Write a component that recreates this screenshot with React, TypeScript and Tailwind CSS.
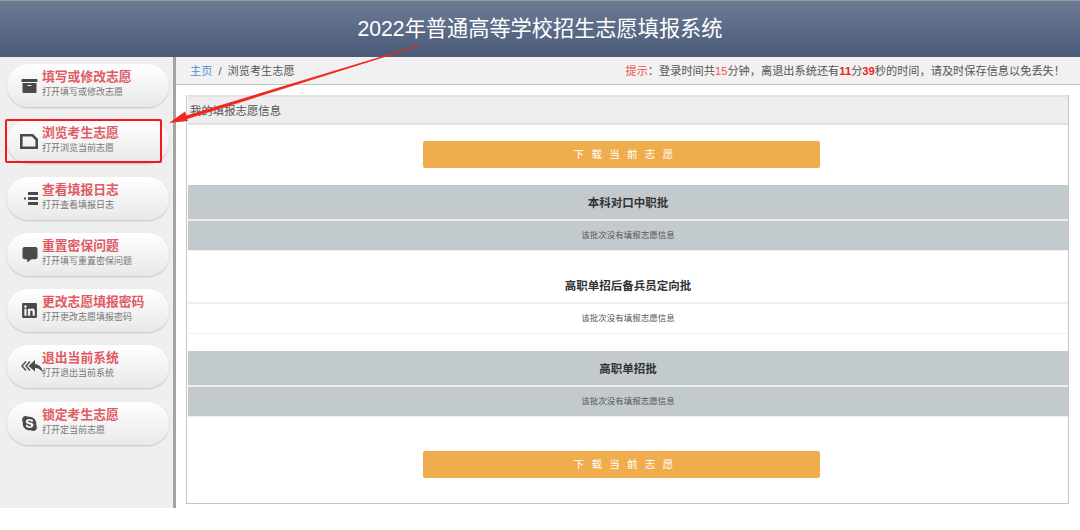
import type { ReactNode } from 'react';
import { FaArchive, FaCommentAlt, FaLinkedin, FaSkype } from 'react-icons/fa';

const font = { fontFamily: '"Liberation Sans", "Noto Sans CJK SC", sans-serif' };

function NoteIcon() {
  return (
    <svg viewBox="0 0 18 15" className="h-[15px] w-[18px]">
      <path d="M1.3 1.3h11.2l4.2 4.2v8.2H1.3z" fill="#f4f4f4" stroke="#4a4a4a" strokeWidth="2.6" />
    </svg>
  );
}

function ListIcon() {
  return (
    <svg viewBox="0 0 14 13" className="h-[13px] w-[14px]" fill="#4a4a4a">
      <rect x="4" y="0" width="10" height="3" />
      <rect x="4" y="5" width="10" height="3" />
      <rect x="4" y="10" width="10" height="3" />
      <rect x="0" y="5.5" width="2" height="2" />
    </svg>
  );
}

function ExitIcon() {
  return (
    <svg viewBox="0 0 22 15" className="-mr-[5px] h-[15px] w-[22px]">
      <path d="M5 2.5 1 7l4 4.5" fill="none" stroke="#4a4a4a" strokeWidth="1.4" />
      <path d="M9 2.5 5 7l4 4.5" fill="none" stroke="#4a4a4a" strokeWidth="1.4" />
      <path d="M14 1 7.5 7l6.5 5.5V9c3.5 0 6 1.5 8 5-.6-5-3.5-8.5-8-9z" fill="#4a4a4a" />
    </svg>
  );
}

const navItems: { title: string; sub: string; icon: ReactNode; active?: boolean }[] = [
  { title: '填写或修改志愿', sub: '打开填写或修改志愿', icon: <FaArchive className="h-[16px] w-[17px] text-[#4a4a4a]" /> },
  { title: '浏览考生志愿', sub: '打开浏览当前志愿', icon: <NoteIcon />, active: true },
  { title: '查看填报日志', sub: '打开查看填报日志', icon: <ListIcon /> },
  { title: '重置密保问题', sub: '打开填写重置密保问题', icon: <FaCommentAlt className="h-[15px] w-[16px] text-[#4a4a4a]" /> },
  { title: '更改志愿填报密码', sub: '打开更改志愿填报密码', icon: <FaLinkedin className="h-[17px] w-[17px] text-[#4a4a4a]" /> },
  { title: '退出当前系统', sub: '打开退出当前系统', icon: <ExitIcon /> },
  { title: '锁定考生志愿', sub: '打开定当前志愿', icon: <FaSkype className="h-[17px] w-[17px] text-[#4a4a4a]" /> },
];

const batches = [
  { name: '本科对口中职批', tinted: true },
  { name: '高职单招后备兵员定向批', tinted: false },
  { name: '高职单招批', tinted: true },
];

function NavPill({ title, sub, icon, active }: { title: string; sub: string; icon: ReactNode; active?: boolean }) {
  return (
    <div className="relative flex h-[43px] w-[162px] items-center rounded-full bg-gradient-to-b from-white to-[#e9e9e9] shadow-[0_1px_2px_rgba(0,0,0,0.2)]">
      <div className="flex w-[35px] shrink-0 justify-end pr-[4px]">{icon}</div>
      <div className="-mt-[5px] flex flex-col">
        <span className="text-[12.8px] leading-[17px] font-bold text-[#e05a64]">{title}</span>
        <span className="mt-[1px] text-[9px] leading-[12px] text-[#777]">{sub}</span>
      </div>
      {active && (
        <div className="absolute -top-[1px] -left-[2px] h-[44px] w-[157px] rounded-[2px] border-2 border-[#f5171b]" />
      )}
    </div>
  );
}

function DownloadButton() {
  return (
    <div className="ml-[236px] flex h-[27px] w-[397px] items-center justify-center rounded-[2px] bg-[#f0ad4e] pl-[6px] text-[10.5px] tracking-[2.2px] whitespace-pre text-white">
      下 载 当 前 志 愿
    </div>
  );
}

function Batch({ name, tinted }: { name: string; tinted: boolean }) {
  const bg = tinted ? 'bg-[#c3cace]' : 'bg-white';
  return (
    <div className="flex flex-col border-b border-[#eeeeee]">
      <div className={`flex h-[36px] items-center justify-center border-b-2 border-[#eeeeee] pt-[3px] text-[11.5px] font-bold text-[#333] ${bg}`}>
        {name}
      </div>
      <div className={`flex h-[29px] items-center justify-center text-[8.5px] text-[#555] ${bg}`}>
        该批次没有填报志愿信息
      </div>
    </div>
  );
}

export default function App() {
  return (
    <div className="relative h-[530px] w-[1080px] overflow-hidden bg-white" style={font}>
      <header className="flex h-[57px] items-center justify-center border-t border-[#999] bg-gradient-to-b from-[#6c7c96] to-[#4b5a78] text-[21.2px] text-white">
        2022年普通高等学校招生志愿填报系统
      </header>

      <div className="flex h-[451px]">
        <aside className="flex w-[176px] shrink-0 flex-col gap-[13.3px] border-r-[3px] border-[#a3a3a3] bg-[#efefef] pt-[7px] pl-[7px]">
          {navItems.map((item) => (
            <NavPill key={item.title} {...item} />
          ))}
        </aside>

        <main className="flex min-w-0 flex-1 flex-col">
          <div className="flex h-[28px] items-center justify-between border-b border-[#c4c4c4] bg-[#f1f1f1] pt-[1px] pr-[15px] pl-[14px] text-[11.2px] text-[#555]">
            <div>
              <span className="text-[#4a90d0]">主页</span>
              <span className="mx-[6px]">/</span>
              <span>浏览考生志愿</span>
            </div>
            <div>
              <span className="text-[#f05050]">提示</span>
              {'\uFF1A登录时间共'}
              <span className="text-[#f05050]">15</span>
              {'分钟\uFF0C离退出系统还有'}
              <span className="font-bold text-[#f01c1c]">11</span>
              {'分'}
              <span className="font-bold text-[#f01c1c]">39</span>
              {'秒的时间\uFF0C请及时保存信息以免丢失\uFF01'}
            </div>
          </div>

          <div className="mt-[10px] mr-[11px] ml-[10px] flex h-[409px] flex-col border-x border-b border-[#c6c6c6]">
            <div className="ml-[1px] flex h-[30px] items-center border-y-2 border-[#e2e2e2] bg-[#eeeeee] pt-[3px] pl-[2px] text-[11.4px] text-[#555]">
              我的填报志愿信息
            </div>
            <div className="mt-[16px]">
              <DownloadButton />
            </div>
            <div className="mt-[17px] ml-[1px] flex flex-col gap-[17px]">
              {batches.map((b) => (
                <Batch key={b.name} name={b.name} tinted={b.tinted} />
              ))}
            </div>
            <div className="mt-[34px]">
              <DownloadButton />
            </div>
          </div>
        </main>
      </div>

      <svg className="pointer-events-none absolute top-0 left-0 h-[530px] w-[1080px]" viewBox="0 0 1080 530">
        <polygon points="418,45.6 418.3,46.4 184,120 183,116.5" fill="#f0281e" />
        <polygon points="169,123 185,111.5 188,121" fill="#f0281e" />
      </svg>
    </div>
  );
}
